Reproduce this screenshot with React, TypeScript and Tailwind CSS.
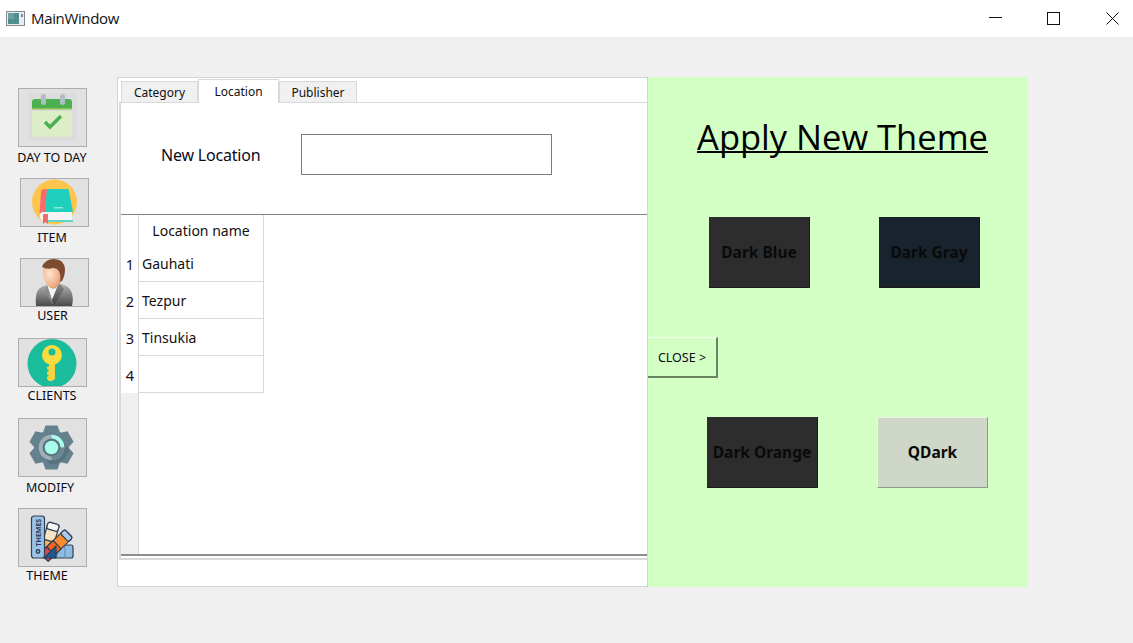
import React from "react";

const SANS = "font-['Noto_Sans',sans-serif]";

function Calendar() {
  return (
    <svg width="67" height="57" viewBox="0 0 67 57">
      <rect x="10" y="4" width="48" height="48" fill="#dcdcdc" />
      <path d="M13 22 V45 a3 3 0 0 0 3 3 H50 a3 3 0 0 0 3-3 V22 Z" fill="#dcedc8" />
      <path d="M13 20 V13 a3 3 0 0 1 3-3 H50 a3 3 0 0 1 3 3 V20 Z" fill="#4caf50" />
      <rect x="13" y="19" width="40" height="1.500" fill="#8bc34a" />
      <rect x="22" y="5" width="5" height="11" rx="2.500" fill="#b0bec5" />
      <rect x="41" y="5" width="5" height="11" rx="2.500" fill="#b0bec5" />
      <path d="M26 33 L31 38 L42 27" fill="none" stroke="#4caf50" strokeWidth="3.500" />
    </svg>
  );
}

function Book() {
  return (
    <svg width="67" height="47" viewBox="0 0 67 47">
      <circle cx="33.500" cy="23" r="22.500" fill="#fdc54b" />
      <path d="M18.500 34 L20 13 Q20.500 10 23 10 H27 V34 Z" fill="#fb6b6b" />
      <path d="M26 10 H47.500 L52 33 H24 Z" fill="#1fd1bd" />
      <rect x="33" y="28" width="9" height="1.500" fill="#8fe6dc" />
      <path d="M21 33 H51 V41.500 H21 Q16 37 21 33 Z" fill="#f4f4f4" />
      <rect x="22" y="41" width="30" height="2" fill="#5fd6c8" />
      <path d="M22 35 H27 V45 L24.500 43 L22 45 Z" fill="#f26a6a" />
    </svg>
  );
}

function UserIcon() {
  return (
    <svg width="67" height="47" viewBox="0 0 67 47">
      <defs>
        <linearGradient id="suit" x1="0" y1="0" x2="0" y2="1">
          <stop offset="0" stopColor="#b4b4b4" />
          <stop offset="1" stopColor="#4a4a4a" />
        </linearGradient>
        <linearGradient id="suit2" x1="0" y1="0" x2="0" y2="1">
          <stop offset="0" stopColor="#8c8c8c" />
          <stop offset="1" stopColor="#3e3e3e" />
        </linearGradient>
        <radialGradient id="skin" cx="0.350" cy="0.400" r="0.800">
          <stop offset="0" stopColor="#fce3cd" />
          <stop offset="0.600" stopColor="#f0b48e" />
          <stop offset="1" stopColor="#c9835c" />
        </radialGradient>
      </defs>
      <path d="M15 47 Q14 36 17 31 Q20 27 29 25 L40 25 Q48 27 50 32 Q53 38 51 47 Z" fill="url(#suit)" />
      <path d="M26 26 L38 24 L34 34 L31 41 Z" fill="#f2f4f4" />
      <path d="M26 26 L24 33 L33 47 L31 41 Z" fill="#8a8a8a" />
      <path d="M38 24 L43 30 L33 47 L31 41 Z" fill="url(#suit2)" />
      <path d="M22 12 Q22 5 31 5 Q41 5 41 15 Q41 24 35 29 Q30 31 27 27 Q22 21 22 12 Z" fill="url(#skin)" />
      <path d="M21 8 Q24 0 33 0 Q43 0 44 10 Q44 17 41 22 L39 23 Q40 16 38 12 Q36 9 32 9 Q26 11 21 8 Z" fill="#7d4b2e" />
    </svg>
  );
}

function KeyIcon() {
  return (
    <svg width="67" height="47" viewBox="0 0 67 47">
      <circle cx="33" cy="24.500" r="24.500" fill="#1abc9c" />
      <path d="M30 22 h6 v18 l-3 2 h-3 l-2-2 v-2 l2-1.500 -2-1.500 v-2 l2-1.500 -2-1.500 v-2 l2-1 Z" fill="#f5d33f" />
      <circle cx="33" cy="16" r="10" fill="#f9dc3e" />
      <circle cx="33" cy="13" r="3.500" fill="#1abc9c" />
    </svg>
  );
}

function GearIcon() {
  return (
    <svg width="67" height="57" viewBox="0 0 67 57">
      <g transform="translate(32.500 28.500)">
        <g fill="#66818e">
          <circle r="17.500" />
          {[0, 60, 120, 180, 240, 300].map((a) => (
            <path key={a} d="M-8.500 -15 L-6 -22 H6 L8.500 -15 Z" transform={`rotate(${a})`} />
          ))}
        </g>
        <path d="M-8 10 L-1 17 Q8 17 13 11 L18 2 L9 -8 Z" fill="#587280" />
        <circle r="12.800" fill="#9fb0b8" />
        <path d="M0 -12.800 A12.800 12.800 0 0 1 12.800 0 H9 A9 9 0 0 0 0 -9 Z" fill="#a7ffeb" />
        <path d="M12.800 0 A12.800 12.800 0 0 1 0 12.800 V9 A9 9 0 0 0 9 0 Z" fill="#6d8895" />
        <circle r="9" fill="#5a7480" />
        <circle r="6.800" fill="#a7ffeb" />
      </g>
    </svg>
  );
}

function ThemeIcon() {
  return (
    <svg width="67" height="57" viewBox="0 0 67 57">
      <g stroke="#2e4057" strokeWidth="1.200" strokeLinejoin="round">
        <path d="M25 36 H52 Q54 36 54 38 V47 Q54 49 52 49 H25 Z" fill="#8fbce0" />
        <path d="M38 36 V49 M46 36 V49" fill="none" stroke="#5f93bf" />
        <g transform="rotate(16 25 48)">
          <rect x="19.500" y="13" width="11.500" height="35" rx="2" fill="#f6e3bf" />
          <rect x="19.500" y="13" width="11.500" height="7" rx="2" fill="#f8f8f8" />
          <rect x="19.500" y="31" width="11.500" height="17" fill="#f9b94f" />
        </g>
        <g transform="rotate(46 25 48)">
          <rect x="19.500" y="14" width="11.500" height="34" rx="2" fill="#fb8a2c" />
          <rect x="19.500" y="14" width="11.500" height="6" rx="2" fill="#a9cbe8" />
          <rect x="19.500" y="30" width="11.500" height="9" fill="#f4661e" />
          <rect x="19.500" y="39" width="11.500" height="9" fill="#e2474b" />
        </g>
        <path d="M25 49 L37 37 V49 Z" fill="#20598f" />
        <rect x="12.500" y="7" width="13" height="42" rx="2.500" fill="#9cc3e6" />
        <circle cx="19" cy="42.500" r="1.700" fill="none" strokeWidth="1.400" />
      </g>
      <text
        x="0"
        y="0"
        transform="translate(21.800 37.500) rotate(-90)"
        fontSize="7"
        fontWeight="700"
        fill="#2e4057"
        fontFamily="Noto Sans, sans-serif"
      >
        THEMES
      </text>
    </svg>
  );
}

function SideItem({
  icon,
  label,
  btnClass,
  labelClass,
}: {
  icon: React.ReactNode;
  label: string;
  btnClass: string;
  labelClass: string;
}) {
  return (
    <div className="flex flex-col">
      <div
        className={`box-border w-[69px] border border-[#adadad] bg-[#e1e1e1] flex items-center justify-center overflow-hidden ${btnClass}`}
      >
        {icon}
      </div>
      <div
        className={`h-[14px] text-[12.500px] leading-[14px] text-[#0a0a14] whitespace-nowrap text-center w-[104px] ${labelClass}`}
      >
        {label}
      </div>
    </div>
  );
}

function DarkButton({ label, className }: { label: string; className: string }) {
  return (
    <div
      className={`box-border h-[71px] flex items-center justify-center pt-[1px] border-r border-b border-[#1a1a1a] font-bold text-[15.500px] text-[#0a0a0a] ${className}`}
    >
      {label}
    </div>
  );
}

export default function App() {
  const rows = ["Gauhati", "Tezpur", "Tinsukia", ""];
  return (
    <div className={`w-[1133px] h-[643px] bg-[#f0f0f0] flex flex-col overflow-hidden ${SANS}`}>
      <header className="h-[37px] bg-white flex items-center shrink-0">
        <svg className="ml-[6px]" width="19" height="16" viewBox="0 0 19 16">
          <rect x="0.500" y="0.500" width="18" height="14" fill="#e8eef2" stroke="#7e8a90" />
          <rect x="2" y="2" width="11" height="11" fill="#4f8f8c" />
          <rect x="2" y="2" width="6" height="6" fill="#6ea09c" />
          <rect x="15" y="3" width="2" height="3" fill="#7e8a90" />
        </svg>
        <span className="ml-[6px] text-[15px] text-[#111] font-['Open_Sans',sans-serif] tracking-[-0.35px]">MainWindow</span>
        <div className="ml-auto flex items-center">
          <svg width="13" height="13" viewBox="0 0 13 13" className="mr-[45px]">
            <path d="M0 5.500 H13" stroke="#111" />
          </svg>
          <svg width="13" height="13" viewBox="0 0 13 13" className="mr-[46px]">
            <rect x="0.500" y="0.500" width="12" height="12" fill="none" stroke="#111" />
          </svg>
          <svg width="13" height="13" viewBox="0 0 13 13" className="mr-[14px]">
            <path d="M0.500 0.500 L12.500 12.500 M12.500 0.500 L0.500 12.500" stroke="#111" />
          </svg>
        </div>
      </header>

      <div className="flex flex-1 pt-[40px]">
        <aside className="w-[117px] shrink-0 pt-[11px] flex flex-col">
          <SideItem
            icon={<Calendar />}
            label="DAY TO DAY"
            btnClass="ml-[18px] h-[59px]"
            labelClass="mt-[4px] mb-[13px]"
          />
          <SideItem
            icon={<Book />}
            label="ITEM"
            btnClass="ml-[20px] h-[49px]"
            labelClass="mt-[4px] mb-[13px]"
          />
          <SideItem
            icon={<UserIcon />}
            label="USER"
            btnClass="ml-[20px] h-[49px]"
            labelClass="mt-[2px] mb-[15px] pl-[1px]"
          />
          <SideItem
            icon={<KeyIcon />}
            label="CLIENTS"
            btnClass="ml-[18px] h-[49px]"
            labelClass="mt-[2px] mb-[15px]"
          />
          <SideItem
            icon={<GearIcon />}
            label="MODIFY"
            btnClass="ml-[18px] h-[59px]"
            labelClass="mt-[4px] mb-[13px] pr-[4px]"
          />
          <SideItem
            icon={<ThemeIcon />}
            label="THEME"
            btnClass="ml-[18px] h-[59px]"
            labelClass="mt-[2px] pr-[10px]"
          />
        </aside>

        <main className="flex w-[911px] h-[510px]">
          <section className="box-border w-[530px] h-full bg-white border border-r-0 border-[#d4d4d4] flex flex-col pt-[1px]">
            <div className="flex items-end h-[24px] pl-[3px] relative z-10 -mb-[1px] text-[12px] text-[#111]">
              <div className="box-border w-[77px] h-[22px] bg-[#f0f0f0] border border-[#d9d9d9] flex items-center justify-center pt-[1px]">
                Category
              </div>
              <div className="box-border w-[81px] h-[24px] bg-white border border-b-0 border-[#d9d9d9] flex items-center justify-center">
                Location
              </div>
              <div className="box-border w-[78px] h-[22px] bg-[#f0f0f0] border border-[#d9d9d9] flex items-center justify-center pt-[1px]">
                Publisher
              </div>
            </div>

            <div className="box-border ml-[1px] h-[458px] border-l-2 border-t border-b-2 border-[#d9d9d9] flex flex-col">
              <div className="h-[111px] shrink-0 flex items-center pb-[9px]">
                <span className="ml-[40px] mt-[2px] w-[140px] text-[16px] text-[#0a0a1a] tracking-[-0.2px]">New Location</span>
                <div className="box-border w-[251px] h-[41px] border border-[#7a7a7a] bg-white" />
              </div>
              <div className="h-px bg-[#808488] shrink-0" />
              <div className="flex flex-1 min-h-0">
                <div className="w-[17px] bg-[#f0f0f0] flex flex-col shrink-0">
                  <div className="h-[30px] bg-white" />
                  {rows.map((_, i) => (
                    <div
                      key={i}
                      className="h-[37px] bg-white flex items-center justify-center pl-[1px] pt-[2px] text-[14.500px] text-[#1c0a1c]"
                    >
                      {i + 1}
                    </div>
                  ))}
                </div>
                <div className="box-border w-[126px] shrink-0 border-l border-[#d9d9d9] flex flex-col">
                  <div className="box-border h-[30px] border-r border-[#d9d9d9] flex items-center justify-center text-[14px] text-[#111]">
                    Location name
                  </div>
                  {rows.map((r, i) => (
                    <div
                      key={i}
                      className="box-border h-[37px] border-r border-b border-[#d9d9d9] flex items-center pl-[3px] pt-[1px] text-[14px] text-[#111]"
                    >
                      {r}
                    </div>
                  ))}
                </div>
              </div>
              <div className="h-[2px] bg-[#8a8e92] shrink-0" />
              <div className="h-[2px] shrink-0" />
            </div>
          </section>

          <section className="w-[381px] h-full bg-[#d3ffc5] border-l border-[#d4d4d4] flex flex-col box-border">
            <h1 className="mt-[35px] mb-[1px] h-[50px] text-[34.500px] leading-[50px] text-center text-black underline underline-offset-[1px] decoration-[2px] [text-decoration-skip-ink:none] pl-[9px] font-['Open_Sans',sans-serif]">
              Apply New Theme
            </h1>
            <div className="flex mt-[54px] pl-[61px] gap-[69px]">
              <DarkButton label="Dark Blue" className="w-[101px] bg-[#2d2d2d]" />
              <DarkButton label="Dark Gray" className="w-[101px] bg-[#19232d]" />
            </div>
            <div className="box-border mt-[49px] w-[70px] h-[41px] pt-[2px] bg-[#d3ffc5] border-t border-r-2 border-b-2 border-t-[#f0fff0] border-r-[#6a8562] border-b-[#6a8562] flex items-center justify-center text-[12.500px] text-[#0a0a14]">
              CLOSE &gt;
            </div>
            <div className="flex mt-[39px] pl-[59px] gap-[59px]">
              <DarkButton label="Dark Orange" className="w-[111px] bg-[#2d2d2d]" />
              <DarkButton label="QDark" className="w-[111px] bg-[#cfd8c8] border-t border-l border-t-[#eef2ea] border-l-[#eef2ea] border-r-[#8f9a8a] border-b-[#8f9a8a]" />
            </div>
          </section>
        </main>
      </div>
    </div>
  );
}
